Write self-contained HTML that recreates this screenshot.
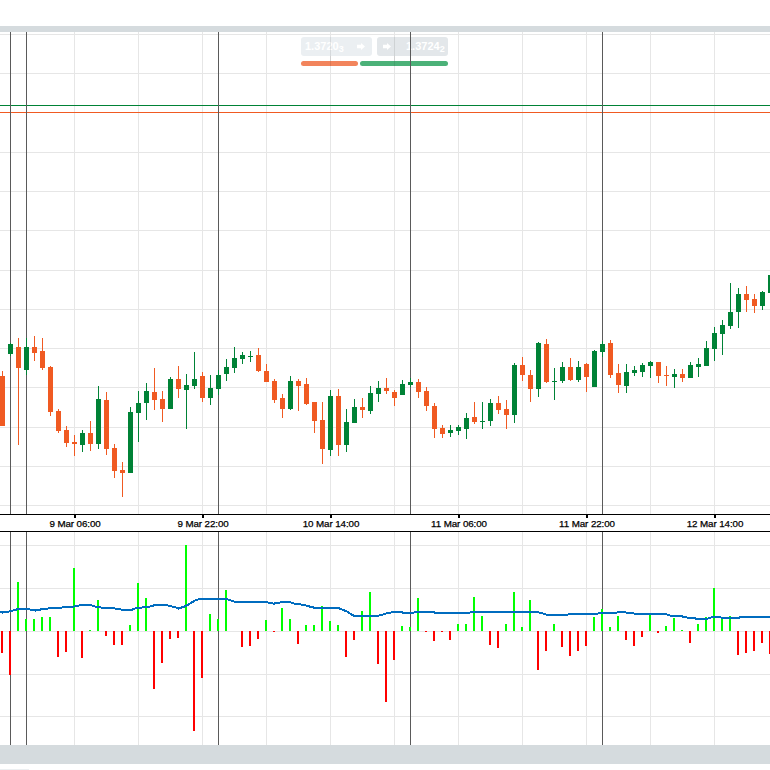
<!DOCTYPE html>
<html><head><meta charset="utf-8"><style>
html,body{margin:0;padding:0;background:#fff;width:770px;height:770px;overflow:hidden}
svg{display:block}
text{font-family:"Liberation Sans",sans-serif;font-size:9.8px;fill:#000;stroke:#000;stroke-width:0.25px;letter-spacing:-0.1px}
.pt{stroke:none}
.pt{font-family:"Liberation Sans",sans-serif;font-size:11px;font-weight:bold;fill:#fff}
</style></head><body>
<svg width="770" height="770" viewBox="0 0 770 770">
<rect x="0" y="26" width="770" height="6" fill="#d5dbde"/>

<g shape-rendering="crispEdges">
<rect x="0" y="34" width="770" height="1" fill="#e6e6e6"/>
<rect x="0" y="73" width="770" height="1" fill="#e6e6e6"/>
<rect x="0" y="112" width="770" height="1" fill="#e6e6e6"/>
<rect x="0" y="152" width="770" height="1" fill="#e6e6e6"/>
<rect x="0" y="191" width="770" height="1" fill="#e6e6e6"/>
<rect x="0" y="230" width="770" height="1" fill="#e6e6e6"/>
<rect x="0" y="270" width="770" height="1" fill="#e6e6e6"/>
<rect x="0" y="309" width="770" height="1" fill="#e6e6e6"/>
<rect x="0" y="348" width="770" height="1" fill="#e6e6e6"/>
<rect x="0" y="387" width="770" height="1" fill="#e6e6e6"/>
<rect x="0" y="427" width="770" height="1" fill="#e6e6e6"/>
<rect x="0" y="466" width="770" height="1" fill="#e6e6e6"/>
<rect x="0" y="505" width="770" height="1" fill="#e6e6e6"/>
<rect x="0" y="545" width="770" height="1" fill="#e6e6e6"/>
<rect x="0" y="588" width="770" height="1" fill="#e6e6e6"/>
<rect x="0" y="631" width="770" height="1" fill="#e6e6e6"/>
<rect x="0" y="674" width="770" height="1" fill="#e6e6e6"/>
<rect x="0" y="716" width="770" height="1" fill="#e6e6e6"/>
<rect x="10" y="32" width="1" height="482" fill="#e6e6e6"/>
<rect x="10" y="532" width="1" height="213" fill="#e6e6e6"/>
<rect x="74" y="32" width="1" height="482" fill="#e6e6e6"/>
<rect x="74" y="532" width="1" height="213" fill="#e6e6e6"/>
<rect x="138" y="32" width="1" height="482" fill="#e6e6e6"/>
<rect x="138" y="532" width="1" height="213" fill="#e6e6e6"/>
<rect x="202" y="32" width="1" height="482" fill="#e6e6e6"/>
<rect x="202" y="532" width="1" height="213" fill="#e6e6e6"/>
<rect x="266" y="32" width="1" height="482" fill="#e6e6e6"/>
<rect x="266" y="532" width="1" height="213" fill="#e6e6e6"/>
<rect x="330" y="32" width="1" height="482" fill="#e6e6e6"/>
<rect x="330" y="532" width="1" height="213" fill="#e6e6e6"/>
<rect x="394" y="32" width="1" height="482" fill="#e6e6e6"/>
<rect x="394" y="532" width="1" height="213" fill="#e6e6e6"/>
<rect x="458" y="32" width="1" height="482" fill="#e6e6e6"/>
<rect x="458" y="532" width="1" height="213" fill="#e6e6e6"/>
<rect x="522" y="32" width="1" height="482" fill="#e6e6e6"/>
<rect x="522" y="532" width="1" height="213" fill="#e6e6e6"/>
<rect x="586" y="32" width="1" height="482" fill="#e6e6e6"/>
<rect x="586" y="532" width="1" height="213" fill="#e6e6e6"/>
<rect x="650" y="32" width="1" height="482" fill="#e6e6e6"/>
<rect x="650" y="532" width="1" height="213" fill="#e6e6e6"/>
<rect x="714" y="32" width="1" height="482" fill="#e6e6e6"/>
<rect x="714" y="532" width="1" height="213" fill="#e6e6e6"/>
</g>
<g>
<rect x="301" y="37" width="71" height="19" rx="3" fill="#ebeff2"/>
<rect x="377" y="37" width="71" height="19" rx="3" fill="#e3e7ea"/>
<text class="pt" x="305" y="50" style="letter-spacing:0">1.3720<tspan font-size="9" dy="1.5">3</tspan></text>
<text class="pt" x="406" y="50" style="letter-spacing:0">1.3724<tspan font-size="9" dy="1.5">2</tspan></text>
<path d="M357 44.8 H361 V43 L365 46.5 L361 50 V48.3 H357 Z" fill="#fff"/>
<path d="M383 44.8 H387 V43 L391 46.5 L387 50 V48.3 H383 Z" fill="#fff"/>
<rect x="301" y="61" width="57" height="5" rx="2.5" fill="#f2845c"/>
<rect x="360" y="61" width="88" height="5" rx="2.5" fill="#4bb178"/>
<rect x="330" y="37" width="1" height="29" fill="rgba(0,0,0,0.09)" shape-rendering="crispEdges"/>
<rect x="394" y="37" width="1" height="29" fill="rgba(0,0,0,0.09)" shape-rendering="crispEdges"/>
</g>

<g shape-rendering="crispEdges">
<rect x="0" y="105" width="770" height="1" fill="#008236"/>
<rect x="0" y="112" width="770" height="1" fill="#f05a22"/>
<rect x="10" y="32" width="1" height="482" fill="#5a5a5a"/>
<rect x="10" y="532" width="1" height="213" fill="#5a5a5a"/>
<rect x="26" y="32" width="1" height="482" fill="#5a5a5a"/>
<rect x="26" y="532" width="1" height="213" fill="#5a5a5a"/>
<rect x="218" y="32" width="1" height="482" fill="#5a5a5a"/>
<rect x="218" y="532" width="1" height="213" fill="#5a5a5a"/>
<rect x="410" y="32" width="1" height="482" fill="#5a5a5a"/>
<rect x="410" y="532" width="1" height="213" fill="#5a5a5a"/>
<rect x="602" y="32" width="1" height="482" fill="#5a5a5a"/>
<rect x="602" y="532" width="1" height="213" fill="#5a5a5a"/>
<rect x="2" y="371" width="1" height="55" fill="#f05a22"/>
<rect x="0" y="376" width="5" height="50" fill="#f05a22"/>
<rect x="10" y="343" width="1" height="13" fill="#008236"/>
<rect x="8" y="344" width="5" height="10" fill="#008236"/>
<rect x="18" y="338" width="1" height="107" fill="#f05a22"/>
<rect x="16" y="347" width="5" height="21" fill="#f05a22"/>
<rect x="26" y="338" width="1" height="37" fill="#008236"/>
<rect x="24" y="347" width="5" height="23" fill="#008236"/>
<rect x="34" y="336" width="1" height="25" fill="#f05a22"/>
<rect x="32" y="347" width="5" height="6" fill="#f05a22"/>
<rect x="42" y="338" width="1" height="32" fill="#f05a22"/>
<rect x="40" y="351" width="5" height="17" fill="#f05a22"/>
<rect x="50" y="366" width="1" height="50" fill="#f05a22"/>
<rect x="48" y="367" width="5" height="45" fill="#f05a22"/>
<rect x="58" y="409" width="1" height="24" fill="#f05a22"/>
<rect x="56" y="411" width="5" height="20" fill="#f05a22"/>
<rect x="66" y="426" width="1" height="21" fill="#f05a22"/>
<rect x="64" y="430" width="5" height="13" fill="#f05a22"/>
<rect x="74" y="435" width="1" height="21" fill="#f05a22"/>
<rect x="72" y="442" width="5" height="2" fill="#f05a22"/>
<rect x="82" y="430" width="1" height="22" fill="#008236"/>
<rect x="80" y="433" width="5" height="12" fill="#008236"/>
<rect x="90" y="421" width="1" height="30" fill="#f05a22"/>
<rect x="88" y="433" width="5" height="11" fill="#f05a22"/>
<rect x="98" y="386" width="1" height="63" fill="#008236"/>
<rect x="96" y="399" width="5" height="45" fill="#008236"/>
<rect x="106" y="392" width="1" height="63" fill="#f05a22"/>
<rect x="104" y="400" width="5" height="49" fill="#f05a22"/>
<rect x="114" y="444" width="1" height="34" fill="#f05a22"/>
<rect x="112" y="448" width="5" height="23" fill="#f05a22"/>
<rect x="122" y="462" width="1" height="35" fill="#f05a22"/>
<rect x="120" y="470" width="5" height="3" fill="#f05a22"/>
<rect x="130" y="407" width="1" height="66" fill="#008236"/>
<rect x="128" y="412" width="5" height="61" fill="#008236"/>
<rect x="138" y="391" width="1" height="51" fill="#008236"/>
<rect x="136" y="403" width="5" height="10" fill="#008236"/>
<rect x="146" y="383" width="1" height="37" fill="#008236"/>
<rect x="144" y="391" width="5" height="12" fill="#008236"/>
<rect x="154" y="368" width="1" height="42" fill="#f05a22"/>
<rect x="152" y="392" width="5" height="8" fill="#f05a22"/>
<rect x="162" y="391" width="1" height="31" fill="#f05a22"/>
<rect x="160" y="399" width="5" height="10" fill="#f05a22"/>
<rect x="170" y="377" width="1" height="32" fill="#008236"/>
<rect x="168" y="379" width="5" height="30" fill="#008236"/>
<rect x="178" y="366" width="1" height="32" fill="#f05a22"/>
<rect x="176" y="379" width="5" height="10" fill="#f05a22"/>
<rect x="186" y="374" width="1" height="55" fill="#008236"/>
<rect x="184" y="385" width="5" height="5" fill="#008236"/>
<rect x="194" y="352" width="1" height="37" fill="#008236"/>
<rect x="192" y="379" width="5" height="7" fill="#008236"/>
<rect x="202" y="372" width="1" height="30" fill="#f05a22"/>
<rect x="200" y="376" width="5" height="22" fill="#f05a22"/>
<rect x="210" y="375" width="1" height="30" fill="#008236"/>
<rect x="208" y="388" width="5" height="10" fill="#008236"/>
<rect x="218" y="370" width="1" height="25" fill="#008236"/>
<rect x="216" y="375" width="5" height="14" fill="#008236"/>
<rect x="226" y="359" width="1" height="22" fill="#008236"/>
<rect x="224" y="367" width="5" height="7" fill="#008236"/>
<rect x="234" y="347" width="1" height="26" fill="#008236"/>
<rect x="232" y="358" width="5" height="10" fill="#008236"/>
<rect x="242" y="352" width="1" height="12" fill="#008236"/>
<rect x="240" y="355" width="5" height="4" fill="#008236"/>
<rect x="250" y="351" width="1" height="11" fill="#008236"/>
<rect x="248" y="356" width="5" height="1" fill="#008236"/>
<rect x="258" y="348" width="1" height="24" fill="#f05a22"/>
<rect x="256" y="355" width="5" height="16" fill="#f05a22"/>
<rect x="266" y="364" width="1" height="18" fill="#f05a22"/>
<rect x="264" y="371" width="5" height="11" fill="#f05a22"/>
<rect x="274" y="379" width="1" height="24" fill="#f05a22"/>
<rect x="272" y="381" width="5" height="19" fill="#f05a22"/>
<rect x="282" y="394" width="1" height="24" fill="#f05a22"/>
<rect x="280" y="398" width="5" height="11" fill="#f05a22"/>
<rect x="290" y="376" width="1" height="34" fill="#008236"/>
<rect x="288" y="381" width="5" height="28" fill="#008236"/>
<rect x="298" y="379" width="1" height="32" fill="#f05a22"/>
<rect x="296" y="381" width="5" height="5" fill="#f05a22"/>
<rect x="306" y="378" width="1" height="27" fill="#f05a22"/>
<rect x="304" y="384" width="5" height="20" fill="#f05a22"/>
<rect x="314" y="402" width="1" height="31" fill="#f05a22"/>
<rect x="312" y="402" width="5" height="19" fill="#f05a22"/>
<rect x="322" y="402" width="1" height="62" fill="#f05a22"/>
<rect x="320" y="420" width="5" height="29" fill="#f05a22"/>
<rect x="330" y="390" width="1" height="66" fill="#008236"/>
<rect x="328" y="396" width="5" height="54" fill="#008236"/>
<rect x="338" y="389" width="1" height="67" fill="#f05a22"/>
<rect x="336" y="396" width="5" height="49" fill="#f05a22"/>
<rect x="346" y="409" width="1" height="43" fill="#008236"/>
<rect x="344" y="422" width="5" height="23" fill="#008236"/>
<rect x="354" y="399" width="1" height="24" fill="#008236"/>
<rect x="352" y="407" width="5" height="16" fill="#008236"/>
<rect x="362" y="398" width="1" height="20" fill="#f05a22"/>
<rect x="360" y="407" width="5" height="3" fill="#f05a22"/>
<rect x="370" y="386" width="1" height="28" fill="#008236"/>
<rect x="368" y="393" width="5" height="18" fill="#008236"/>
<rect x="378" y="381" width="1" height="21" fill="#008236"/>
<rect x="376" y="388" width="5" height="6" fill="#008236"/>
<rect x="386" y="378" width="1" height="16" fill="#f05a22"/>
<rect x="384" y="388" width="5" height="3" fill="#f05a22"/>
<rect x="394" y="390" width="1" height="16" fill="#f05a22"/>
<rect x="392" y="392" width="5" height="6" fill="#f05a22"/>
<rect x="402" y="380" width="1" height="15" fill="#008236"/>
<rect x="400" y="384" width="5" height="11" fill="#008236"/>
<rect x="410" y="378" width="1" height="9" fill="#008236"/>
<rect x="408" y="382" width="5" height="3" fill="#008236"/>
<rect x="418" y="379" width="1" height="19" fill="#f05a22"/>
<rect x="416" y="382" width="5" height="10" fill="#f05a22"/>
<rect x="426" y="387" width="1" height="24" fill="#f05a22"/>
<rect x="424" y="391" width="5" height="15" fill="#f05a22"/>
<rect x="434" y="403" width="1" height="35" fill="#f05a22"/>
<rect x="432" y="406" width="5" height="23" fill="#f05a22"/>
<rect x="442" y="425" width="1" height="13" fill="#f05a22"/>
<rect x="440" y="428" width="5" height="6" fill="#f05a22"/>
<rect x="450" y="425" width="1" height="12" fill="#008236"/>
<rect x="448" y="430" width="5" height="3" fill="#008236"/>
<rect x="458" y="425" width="1" height="10" fill="#008236"/>
<rect x="456" y="427" width="5" height="4" fill="#008236"/>
<rect x="466" y="413" width="1" height="26" fill="#008236"/>
<rect x="464" y="418" width="5" height="11" fill="#008236"/>
<rect x="474" y="402" width="1" height="22" fill="#f05a22"/>
<rect x="472" y="417" width="5" height="5" fill="#f05a22"/>
<rect x="482" y="402" width="1" height="27" fill="#008236"/>
<rect x="480" y="421" width="5" height="1" fill="#008236"/>
<rect x="490" y="399" width="1" height="27" fill="#008236"/>
<rect x="488" y="403" width="5" height="18" fill="#008236"/>
<rect x="498" y="396" width="1" height="18" fill="#f05a22"/>
<rect x="496" y="403" width="5" height="7" fill="#f05a22"/>
<rect x="506" y="400" width="1" height="29" fill="#f05a22"/>
<rect x="504" y="409" width="5" height="6" fill="#f05a22"/>
<rect x="514" y="363" width="1" height="60" fill="#008236"/>
<rect x="512" y="365" width="5" height="50" fill="#008236"/>
<rect x="522" y="357" width="1" height="24" fill="#f05a22"/>
<rect x="520" y="365" width="5" height="10" fill="#f05a22"/>
<rect x="530" y="370" width="1" height="32" fill="#f05a22"/>
<rect x="528" y="375" width="5" height="14" fill="#f05a22"/>
<rect x="538" y="342" width="1" height="55" fill="#008236"/>
<rect x="536" y="343" width="5" height="46" fill="#008236"/>
<rect x="546" y="339" width="1" height="44" fill="#f05a22"/>
<rect x="544" y="344" width="5" height="38" fill="#f05a22"/>
<rect x="554" y="368" width="1" height="32" fill="#008236"/>
<rect x="552" y="381" width="5" height="1" fill="#008236"/>
<rect x="562" y="362" width="1" height="21" fill="#008236"/>
<rect x="560" y="367" width="5" height="14" fill="#008236"/>
<rect x="570" y="358" width="1" height="23" fill="#f05a22"/>
<rect x="568" y="367" width="5" height="13" fill="#f05a22"/>
<rect x="578" y="361" width="1" height="21" fill="#008236"/>
<rect x="576" y="367" width="5" height="13" fill="#008236"/>
<rect x="586" y="363" width="1" height="29" fill="#f05a22"/>
<rect x="584" y="364" width="5" height="13" fill="#f05a22"/>
<rect x="594" y="350" width="1" height="37" fill="#008236"/>
<rect x="592" y="351" width="5" height="36" fill="#008236"/>
<rect x="602" y="341" width="1" height="16" fill="#008236"/>
<rect x="600" y="344" width="5" height="8" fill="#008236"/>
<rect x="610" y="340" width="1" height="38" fill="#f05a22"/>
<rect x="608" y="343" width="5" height="32" fill="#f05a22"/>
<rect x="618" y="364" width="1" height="29" fill="#f05a22"/>
<rect x="616" y="373" width="5" height="12" fill="#f05a22"/>
<rect x="626" y="364" width="1" height="29" fill="#008236"/>
<rect x="624" y="372" width="5" height="14" fill="#008236"/>
<rect x="634" y="366" width="1" height="10" fill="#008236"/>
<rect x="632" y="370" width="5" height="3" fill="#008236"/>
<rect x="642" y="363" width="1" height="14" fill="#008236"/>
<rect x="640" y="365" width="5" height="7" fill="#008236"/>
<rect x="650" y="361" width="1" height="17" fill="#008236"/>
<rect x="648" y="362" width="5" height="4" fill="#008236"/>
<rect x="658" y="362" width="1" height="21" fill="#f05a22"/>
<rect x="656" y="362" width="5" height="14" fill="#f05a22"/>
<rect x="666" y="366" width="1" height="20" fill="#f05a22"/>
<rect x="664" y="375" width="5" height="1" fill="#f05a22"/>
<rect x="674" y="369" width="1" height="19" fill="#008236"/>
<rect x="672" y="374" width="5" height="3" fill="#008236"/>
<rect x="682" y="369" width="1" height="13" fill="#f05a22"/>
<rect x="680" y="374" width="5" height="4" fill="#f05a22"/>
<rect x="690" y="362" width="1" height="16" fill="#008236"/>
<rect x="688" y="365" width="5" height="13" fill="#008236"/>
<rect x="698" y="358" width="1" height="19" fill="#008236"/>
<rect x="696" y="364" width="5" height="3" fill="#008236"/>
<rect x="706" y="341" width="1" height="25" fill="#008236"/>
<rect x="704" y="348" width="5" height="18" fill="#008236"/>
<rect x="714" y="327" width="1" height="34" fill="#008236"/>
<rect x="712" y="333" width="5" height="16" fill="#008236"/>
<rect x="722" y="320" width="1" height="35" fill="#008236"/>
<rect x="720" y="325" width="5" height="9" fill="#008236"/>
<rect x="730" y="283" width="1" height="46" fill="#008236"/>
<rect x="728" y="312" width="5" height="14" fill="#008236"/>
<rect x="738" y="288" width="1" height="40" fill="#008236"/>
<rect x="736" y="294" width="5" height="18" fill="#008236"/>
<rect x="746" y="286" width="1" height="26" fill="#f05a22"/>
<rect x="744" y="294" width="5" height="6" fill="#f05a22"/>
<rect x="754" y="294" width="1" height="19" fill="#f05a22"/>
<rect x="752" y="299" width="5" height="7" fill="#f05a22"/>
<rect x="762" y="291" width="1" height="19" fill="#008236"/>
<rect x="760" y="292" width="5" height="14" fill="#008236"/>
<rect x="770" y="275" width="1" height="18" fill="#008236"/>
<rect x="768" y="275" width="5" height="18" fill="#008236"/>
<rect x="1" y="631" width="2" height="22" fill="#ff0000"/>
<rect x="9" y="631" width="2" height="44" fill="#ff0000"/>
<rect x="17" y="582" width="2" height="49" fill="#00ff00"/>
<rect x="25" y="619" width="2" height="12" fill="#00ff00"/>
<rect x="33" y="619" width="2" height="12" fill="#00ff00"/>
<rect x="41" y="617" width="2" height="14" fill="#00ff00"/>
<rect x="49" y="617" width="2" height="14" fill="#00ff00"/>
<rect x="57" y="631" width="2" height="26" fill="#ff0000"/>
<rect x="65" y="631" width="2" height="21" fill="#ff0000"/>
<rect x="73" y="568" width="2" height="63" fill="#00ff00"/>
<rect x="81" y="631" width="2" height="27" fill="#ff0000"/>
<rect x="89" y="630" width="2" height="1" fill="#00ff00"/>
<rect x="97" y="600" width="2" height="31" fill="#00ff00"/>
<rect x="105" y="631" width="2" height="5" fill="#ff0000"/>
<rect x="113" y="631" width="2" height="14" fill="#ff0000"/>
<rect x="121" y="631" width="2" height="14" fill="#ff0000"/>
<rect x="129" y="625" width="2" height="6" fill="#00ff00"/>
<rect x="137" y="583" width="2" height="48" fill="#00ff00"/>
<rect x="145" y="598" width="2" height="33" fill="#00ff00"/>
<rect x="153" y="631" width="2" height="58" fill="#ff0000"/>
<rect x="161" y="631" width="2" height="32" fill="#ff0000"/>
<rect x="169" y="631" width="2" height="8" fill="#ff0000"/>
<rect x="177" y="631" width="2" height="7" fill="#ff0000"/>
<rect x="185" y="545" width="2" height="86" fill="#00ff00"/>
<rect x="193" y="631" width="2" height="100" fill="#ff0000"/>
<rect x="201" y="631" width="2" height="47" fill="#ff0000"/>
<rect x="209" y="614" width="2" height="17" fill="#00ff00"/>
<rect x="217" y="619" width="2" height="12" fill="#00ff00"/>
<rect x="225" y="590" width="2" height="41" fill="#00ff00"/>
<rect x="241" y="631" width="2" height="16" fill="#ff0000"/>
<rect x="249" y="631" width="2" height="15" fill="#ff0000"/>
<rect x="257" y="631" width="2" height="8" fill="#ff0000"/>
<rect x="265" y="620" width="2" height="11" fill="#00ff00"/>
<rect x="273" y="631" width="2" height="1" fill="#ff0000"/>
<rect x="281" y="608" width="2" height="23" fill="#00ff00"/>
<rect x="289" y="619" width="2" height="12" fill="#00ff00"/>
<rect x="297" y="631" width="2" height="13" fill="#ff0000"/>
<rect x="305" y="625" width="2" height="6" fill="#00ff00"/>
<rect x="313" y="625" width="2" height="6" fill="#00ff00"/>
<rect x="321" y="606" width="2" height="25" fill="#00ff00"/>
<rect x="329" y="621" width="2" height="10" fill="#00ff00"/>
<rect x="337" y="625" width="2" height="6" fill="#00ff00"/>
<rect x="345" y="631" width="2" height="26" fill="#ff0000"/>
<rect x="353" y="631" width="2" height="9" fill="#ff0000"/>
<rect x="361" y="611" width="2" height="20" fill="#00ff00"/>
<rect x="369" y="592" width="2" height="39" fill="#00ff00"/>
<rect x="377" y="631" width="2" height="33" fill="#ff0000"/>
<rect x="385" y="631" width="2" height="71" fill="#ff0000"/>
<rect x="393" y="631" width="2" height="29" fill="#ff0000"/>
<rect x="401" y="626" width="2" height="5" fill="#00ff00"/>
<rect x="409" y="627" width="2" height="4" fill="#00ff00"/>
<rect x="417" y="598" width="2" height="33" fill="#00ff00"/>
<rect x="425" y="631" width="2" height="1" fill="#ff0000"/>
<rect x="433" y="631" width="2" height="10" fill="#ff0000"/>
<rect x="441" y="631" width="2" height="1" fill="#ff0000"/>
<rect x="449" y="631" width="2" height="9" fill="#ff0000"/>
<rect x="457" y="624" width="2" height="7" fill="#00ff00"/>
<rect x="465" y="624" width="2" height="7" fill="#00ff00"/>
<rect x="473" y="597" width="2" height="34" fill="#00ff00"/>
<rect x="481" y="616" width="2" height="15" fill="#00ff00"/>
<rect x="489" y="631" width="2" height="14" fill="#ff0000"/>
<rect x="497" y="631" width="2" height="17" fill="#ff0000"/>
<rect x="505" y="624" width="2" height="7" fill="#00ff00"/>
<rect x="513" y="592" width="2" height="39" fill="#00ff00"/>
<rect x="521" y="627" width="2" height="4" fill="#00ff00"/>
<rect x="529" y="600" width="2" height="31" fill="#00ff00"/>
<rect x="537" y="631" width="2" height="39" fill="#ff0000"/>
<rect x="545" y="631" width="2" height="20" fill="#ff0000"/>
<rect x="553" y="624" width="2" height="7" fill="#00ff00"/>
<rect x="561" y="631" width="2" height="16" fill="#ff0000"/>
<rect x="569" y="631" width="2" height="25" fill="#ff0000"/>
<rect x="577" y="631" width="2" height="20" fill="#ff0000"/>
<rect x="585" y="631" width="2" height="15" fill="#ff0000"/>
<rect x="593" y="617" width="2" height="14" fill="#00ff00"/>
<rect x="601" y="609" width="2" height="22" fill="#00ff00"/>
<rect x="609" y="627" width="2" height="4" fill="#00ff00"/>
<rect x="617" y="616" width="2" height="15" fill="#00ff00"/>
<rect x="625" y="631" width="2" height="9" fill="#ff0000"/>
<rect x="633" y="631" width="2" height="15" fill="#ff0000"/>
<rect x="641" y="631" width="2" height="6" fill="#ff0000"/>
<rect x="649" y="615" width="2" height="16" fill="#00ff00"/>
<rect x="657" y="631" width="2" height="2" fill="#ff0000"/>
<rect x="665" y="626" width="2" height="5" fill="#00ff00"/>
<rect x="673" y="618" width="2" height="13" fill="#00ff00"/>
<rect x="681" y="630" width="2" height="1" fill="#00ff00"/>
<rect x="689" y="631" width="2" height="12" fill="#ff0000"/>
<rect x="697" y="624" width="2" height="7" fill="#00ff00"/>
<rect x="705" y="617" width="2" height="14" fill="#00ff00"/>
<rect x="713" y="588" width="2" height="43" fill="#00ff00"/>
<rect x="721" y="619" width="2" height="12" fill="#00ff00"/>
<rect x="729" y="616" width="2" height="15" fill="#00ff00"/>
<rect x="737" y="631" width="2" height="24" fill="#ff0000"/>
<rect x="745" y="631" width="2" height="22" fill="#ff0000"/>
<rect x="753" y="631" width="2" height="20" fill="#ff0000"/>
<rect x="761" y="631" width="2" height="12" fill="#ff0000"/>
<rect x="769" y="631" width="2" height="23" fill="#ff0000"/>
<polyline points="0,611.4 2.5,612.6 10,611.4 16.6,609.5 20,608.6 33,609.8 35,610.6 43,609 58,607.6 70,607.3 76.5,606 83,604.8 90.6,605.1 98,607.3 114.7,608.5 123,609.8 128,609.8 130,610.6 136,608.1 149,606.8 156,604.8 166,605.1 176,607.6 178.4,608.5 186,606 196,599.8 204,598.7 226,598.7 234,601.5 242,602.3 254,601.8 265.6,602 269,602.8 274,603.6 283,602 289.7,602 295.6,604 303.9,604.8 310.5,606.8 313.8,607.6 337,607.6 342,609.5 347,611.5 354.6,616.4 370,616.4 377,616 382,614.8 387,613.1 394.5,612 402,612.3 403.6,613.1 417,612.3 433.5,612 435.2,613.1 465,613.1 475,612 510,612 537.4,612 541.6,613.1 546.6,614.8 561.5,615.1 570,614.3 593,614 601.4,613.1 616.4,612.6 619.7,611.8 626.4,612.6 638,614 665.4,614 670.6,615.7 681.7,616.2 684.3,617.1 689.4,617.8 698,618.8 706.6,618.8 711.7,617.4 716.9,616.6 722,617.8 737.4,617.8 746,616.6 770,616.6" fill="none" stroke="#006cbf" stroke-width="2"/>
<rect x="0" y="514" width="770" height="1" fill="#000"/>
<rect x="0" y="531" width="770" height="1" fill="#000"/>
<rect x="74" y="515" width="2" height="3" fill="#000"/>
<text x="75" y="527" text-anchor="middle">9 Mar 06:00</text>
<rect x="202" y="515" width="2" height="3" fill="#000"/>
<text x="203" y="527" text-anchor="middle">9 Mar 22:00</text>
<rect x="330" y="515" width="2" height="3" fill="#000"/>
<text x="331" y="527" text-anchor="middle">10 Mar 14:00</text>
<rect x="458" y="515" width="2" height="3" fill="#000"/>
<text x="459" y="527" text-anchor="middle">11 Mar 06:00</text>
<rect x="586" y="515" width="2" height="3" fill="#000"/>
<text x="587" y="527" text-anchor="middle">11 Mar 22:00</text>
<rect x="714" y="515" width="2" height="3" fill="#000"/>
<text x="715" y="527" text-anchor="middle">12 Mar 14:00</text>
<rect x="0" y="745" width="770" height="19" fill="#d5dbde"/>
<rect x="0" y="769" width="29" height="1" fill="#eceff1"/>
</g>
</svg>
</body></html>
